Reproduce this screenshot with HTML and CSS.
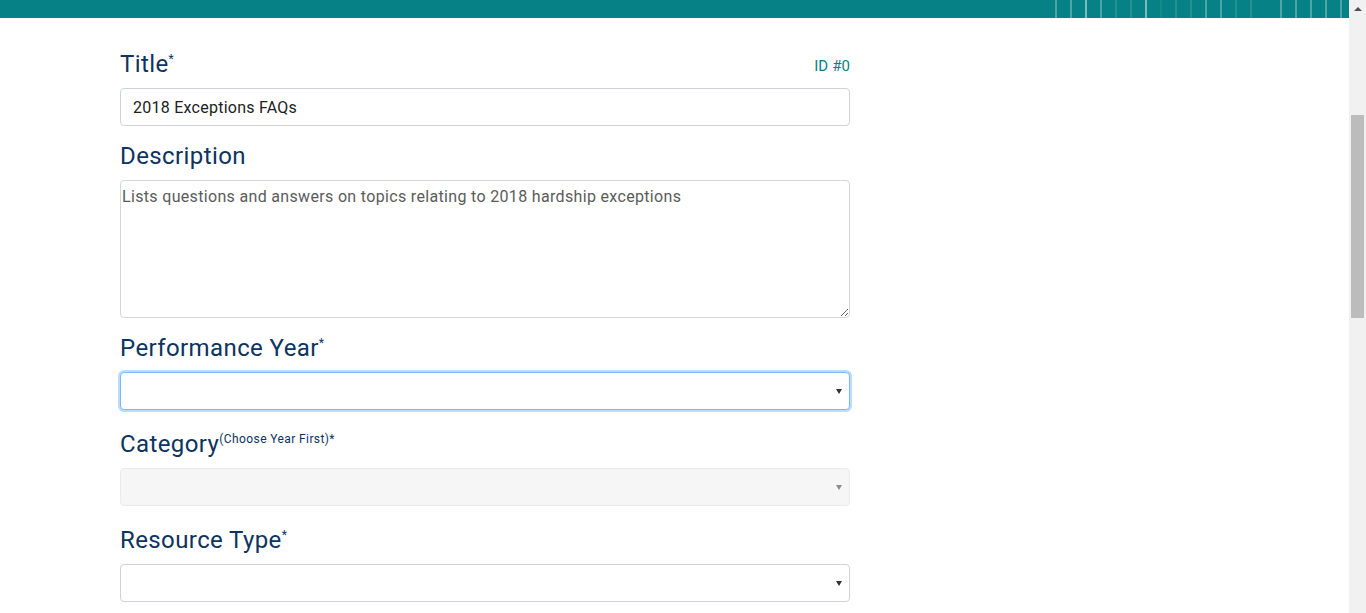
FILE: index.html
```html
<!DOCTYPE html>
<html lang="en">
<head>
<meta charset="utf-8">
<title>Edit Resource</title>
<link rel="stylesheet" href="styles.css">
</head>
<body>
<div class="page">
  <div class="main">
    <header class="topbar">
      <div class="ticks">
        <span class="tick t2"></span><span class="tick t2"></span><span class="tick t1"></span><span class="tick t2"></span><span class="tick t3"></span><span class="tick t3"></span><span class="tick t1"></span><span class="tick t4"></span><span class="tick t3"></span><span class="tick t3"></span><span class="tick t2"></span><span class="tick t2"></span><span class="tick t3"></span><span class="tick t3"></span><span class="tick t0"></span><span class="tick t2"></span><span class="tick t2"></span><span class="tick t2"></span><span class="tick t2"></span><span class="tick t2"></span>
      </div>
    </header>
    <form class="form">
      <div class="group">
        <div class="label-row">
          <label class="label" for="title">Title<sup>*</sup></label>
          <span class="id">ID #0</span>
        </div>
        <input id="title" class="control" type="text" value="2018 Exceptions FAQs">
      </div>
      <div class="group">
        <label class="label" for="desc">Description</label>
        <textarea id="desc" class="control textarea">Lists questions and answers on topics relating to 2018 hardship exceptions</textarea>
      </div>
      <div class="group group-select">
        <label class="label" for="year">Performance Year<sup>*</sup></label>
        <div class="select focused">
          <select id="year" class="control"><option></option></select>
        </div>
      </div>
      <div class="group group-select">
        <label class="label" for="cat">Category<sup>(Choose Year First)*</sup></label>
        <div class="select disabled">
          <select id="cat" class="control" disabled><option></option></select>
        </div>
      </div>
      <div class="group group-select">
        <label class="label" for="type">Resource Type<sup>*</sup></label>
        <div class="select">
          <select id="type" class="control"><option></option></select>
        </div>
      </div>
    </form>
  </div>
  <div class="scrollbar">
    <div class="sb-up"></div>
    <div class="sb-track"><div class="sb-thumb"></div></div>
  </div>
</div>
</body>
</html>
```

FILE: styles.css
```css
* { box-sizing: border-box; }
html, body {
  margin: 0;
  height: 613px;
  overflow: hidden;
  background: #fff;
}
body {
  font-family: Roboto, "Liberation Sans", sans-serif;
  color: #222;
}
.page {
  display: flex;
  height: 613px;
}
.main {
  flex: 1;
  min-width: 0;
}
.topbar {
  height: 18px;
  background: #068286;
  display: flex;
  justify-content: flex-end;
}
.ticks {
  display: flex;
}
.tick {
  width: 15px;
  height: 18px;
  border-left: 2px solid transparent;
}
.tick:last-child { width: 9px; }
.tick.t0 { border-left-color: transparent; }
.tick.t1 { border-left-color: #74bcbe; }
.tick.t2 { border-left-color: #4ea5a8; }
.tick.t3 { border-left-color: #26908f; }
.tick.t4 { border-left-color: #14898c; }

.form {
  width: 730px;
  margin-left: 120px;
  padding-top: 31px;
}
.group { margin-bottom: 15px; }
.group-select { margin-bottom: 19px; }

.label-row {
  display: flex;
  justify-content: space-between;
  align-items: flex-end;
}
.label {
  display: block;
  font-size: 24px;
  line-height: 30px;
  letter-spacing: 0.4px;
  color: #0d335f;
  margin-bottom: 9px;
}
.label sup {
  font-size: 12px;
  line-height: 0;
  letter-spacing: 0.4px;
  vertical-align: super;
  color: #0d335f;
}
.id {
  font-size: 15px;
  letter-spacing: 0.1px;
  color: #067f82;
  margin-bottom: 13px;
}
.control {
  display: block;
  width: 100%;
  height: 38px;
  border: 1px solid #cfd3d8;
  border-radius: 4px;
  background: #fff;
  font-family: inherit;
  font-size: 16px;
  letter-spacing: 0.25px;
  color: #222;
  padding: 0 12px;
  outline: none;
}
.textarea {
  height: 138px;
  padding: 4px 1px;
  line-height: 24px;
  letter-spacing: 0.33px;
  color: #5b5b5b;
  border-color: #d6d6d6;
  resize: vertical;
}
.select {
  position: relative;
}
.select select {
  appearance: none;
  -webkit-appearance: none;
}
.select::after {
  content: "";
  position: absolute;
  right: 8px;
  top: 17px;
  border-top: 5px solid #333;
  border-left: 3.5px solid transparent;
  border-right: 3.5px solid transparent;
}
.select.focused select {
  border-color: #7bbaf8;
  box-shadow: 0 0 0 2px #bcdcfd;
}
.select.disabled select {
  background: #f3f3f3;
  border-color: #e3e3e3;
}
.select.disabled::after { border-top-color: #8c8c8c; }

.scrollbar {
  width: 17px;
  flex: none;
  background: #f1f1f1;
  display: flex;
  flex-direction: column;
}
.sb-up {
  height: 17px;
  display: flex;
  justify-content: center;
  align-items: center;
}
.sb-up::before {
  content: "";
  border-bottom: 4px solid #505050;
  border-left: 4px solid transparent;
  border-right: 4px solid transparent;
}
.sb-track {
  flex: 1;
  padding: 98px 2px 0 2px;
}
.sb-thumb {
  height: 203px;
  background: #bcbcbc;
}
```
